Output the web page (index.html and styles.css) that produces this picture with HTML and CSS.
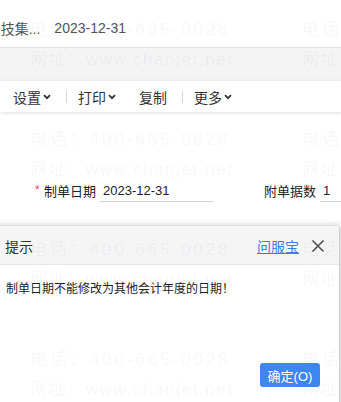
FILE: index.html
```html
<!DOCTYPE html>
<html lang="zh">
<head>
<meta charset="utf-8">
<link rel="stylesheet" href="styles.css">
</head>
<body>
<div class="page">
  <div class="topbar">
    <span class="crumb">-技集...</span>
    <span class="date">2023-12-31</span>
  </div>
  <div class="band"></div>
  <div class="toolbar">
    <span class="tool">设置<svg class="chev" width="8" height="6" viewBox="0 0 8 6"><path d="M1 1.2l3 3 3-3" fill="none" stroke="#333" stroke-width="1.8"/></svg></span>
    <span class="sep"></span>
    <span class="tool">打印<svg class="chev" width="8" height="6" viewBox="0 0 8 6"><path d="M1 1.2l3 3 3-3" fill="none" stroke="#333" stroke-width="1.8"/></svg></span>
    <span class="tool copy">复制</span>
    <span class="sep"></span>
    <span class="tool">更多<svg class="chev" width="8" height="6" viewBox="0 0 8 6"><path d="M1 1.2l3 3 3-3" fill="none" stroke="#333" stroke-width="1.8"/></svg></span>
  </div>
  <div class="form">
    <div class="field">
      <span class="req">*</span>
      <span class="label">制单日期</span>
      <span class="input date-input">2023-12-31</span>
    </div>
    <div class="field field2">
      <span class="label">附单据数</span>
      <span class="input num-input">1</span>
    </div>
  </div>
</div>

<div class="dialog">
  <div class="dlg-head">
    <span class="dlg-title">提示</span>
    <span class="dlg-link">问服宝</span>
    <svg class="dlg-close" width="14" height="14" viewBox="0 0 14 14"><path d="M1.5 1.5l11 11M12.5 1.5l-11 11" stroke="#555" stroke-width="1.7" fill="none"/></svg>
  </div>
  <div class="dlg-body">
    <p class="msg">制单日期不能修改为其他会计年度的日期！</p>
    <div class="dlg-foot"><button class="ok">确定(O)</button></div>
  </div>
</div>

<div class="watermark">
  <div class="wm"><div class="l1">电话：400-665-0028</div><div class="l2">网址：www.chanjet.net</div></div>
  <div class="wm"><div class="l1">电话：400-665-0028</div><div class="l2">网址：www.chanjet.net</div></div>
  <div class="wm"><div class="l1">电话：400-665-0028</div><div class="l2">网址：www.chanjet.net</div></div>
  <div class="wm"><div class="l1">电话：400-665-0028</div><div class="l2">网址：www.chanjet.net</div></div>
  <div class="wm"><div class="l1">电话：400-665-0028</div><div class="l2">网址：www.chanjet.net</div></div>
  <div class="wm"><div class="l1">电话：400-665-0028</div><div class="l2">网址：www.chanjet.net</div></div>
  <div class="wm"><div class="l1">电话：400-665-0028</div><div class="l2">网址：www.chanjet.net</div></div>
  <div class="wm"><div class="l1">电话：400-665-0028</div><div class="l2">网址：www.chanjet.net</div></div>
</div>
</body>
</html>
```
FILE: styles.css
```css
html, body {
  margin: 0;
  padding: 0;
  background: #fff;
  overflow: hidden;
}
body {
  width: 341px;
  height: 402px;
  position: relative;
  font-family: "Liberation Sans", "Noto Sans CJK SC", sans-serif;
  color: #333;
}
.page {
  display: flex;
  flex-direction: column;
  overflow: hidden;
}
.topbar {
  height: 48px;
  box-sizing: border-box;
  padding-top: 9px;
  display: flex;
  align-items: center;
  gap: 14px;
  font-size: 14px;
  color: #555;
  border-bottom: 1px solid #e2e2e2;
  white-space: nowrap;
}
.crumb {
  margin-left: -4px;
}
.band {
  height: 33px;
  background: #f4f4f4;
}
.toolbar {
  height: 31px;
  background: #fff;
  display: flex;
  align-items: center;
  padding-left: 13px;
  font-size: 14px;
  color: #333;
  box-shadow: 0 1px 4px rgba(0,0,0,0.13);
  position: relative;
  white-space: nowrap;
}
.tool {
  display: flex;
  align-items: center;
}
.chev {
  margin-left: 2px;
  margin-top: 1px;
}
.sep {
  width: 1px;
  height: 12px;
  background: #d6d6d6;
  margin: 0 11px 0 15px;
}
.copy {
  margin-left: 23px;
}
.form {
  height: 113px;
  display: flex;
  align-items: flex-start;
  padding-top: 68px;
  box-sizing: border-box;
  font-size: 13px;
  color: #222;
  white-space: nowrap;
}
.field {
  display: flex;
  align-items: center;
  margin-left: 35px;
  flex-shrink: 0;
  height: 20px;
}
.label {
  flex-shrink: 0;
}
.req {
  color: #e8497a;
  width: 9px;
  font-size: 12px;
}
.input {
  margin-left: 4px;
  padding-left: 3px;
  height: 20px;
  line-height: 20px;
  box-sizing: content-box;
  border-bottom: 1px solid #d2d2d2;
  position: relative;
  top: 1px;
  flex-shrink: 0;
}
.date-input {
  width: 110px;
}
.field2 {
  margin-left: 51px;
}
.num-input {
  width: 40px;
}

/* dialog (modal overlay) */
.dialog {
  position: absolute;
  left: -10px;
  top: 226px;
  width: 350px;
  height: 200px;
  background: #fff;
  border-radius: 4px;
  box-shadow: 0 0 6px rgba(0,0,0,0.28);
  border-right: 1px solid #cfcfcf;
  box-sizing: border-box;
  overflow: hidden;
  z-index: 2;
}
.dlg-head {
  height: 39px;
  background: #f5f5f5;
  border-bottom: 1px solid #e6e6e6;
  display: flex;
  align-items: center;
  padding-left: 15px;
  padding-top: 2px;
  box-sizing: border-box;
}
.dlg-title {
  font-size: 14px;
  color: #333;
  flex: 1;
}
.dlg-link {
  font-size: 14px;
  color: #3b7de6;
  text-decoration: underline;
}
.dlg-close {
  margin-left: 12px;
  margin-right: 14px;
}
.dlg-body {
  padding: 0 0 0 16px;
}
.msg {
  margin: 16px 0 0;
  font-size: 12px;
  line-height: 16px;
  color: #222;
}
.dlg-foot {
  display: flex;
  justify-content: flex-end;
  padding-right: 19px;
  margin-top: 66px;
}
.ok {
  width: 60px;
  height: 24px;
  border: none;
  border-radius: 3px;
  background: #3c87f0;
  color: #fff;
  font-family: "Liberation Sans", "Noto Sans CJK SC", sans-serif;
  font-size: 13px;
  padding: 0;
}

/* watermark overlay */
.watermark {
  position: absolute;
  left: 30px;
  top: 15px;
  display: grid;
  grid-template-columns: 272px 272px;
  grid-auto-rows: 110px;
  pointer-events: none;
  z-index: 5;
  font-size: 17px;
  line-height: 30px;
  color: rgba(0,0,0,0.05);
  white-space: nowrap;
}
.l1 {
  letter-spacing: 2.9px;
}
.l2 {
  letter-spacing: 1.6px;
}
```
